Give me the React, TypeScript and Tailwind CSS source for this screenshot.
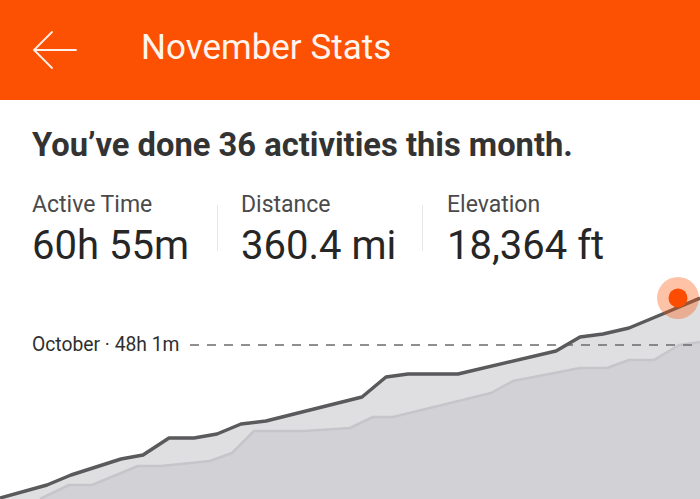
import React from "react";

const dark: [number, number][] = [
  [0, 498], [47, 485], [71, 475], [121, 459], [143, 455], [169, 438], [194, 438],
  [217, 434], [241, 424], [266, 421], [362, 397], [386, 377], [408, 374], [458, 374],
  [556, 351], [580, 337], [603, 334], [629, 328], [665, 313], [700, 298],
];

const light: [number, number][] = [
  [40, 499], [69, 485], [92, 485], [138, 466], [161, 466], [210, 461], [232, 453],
  [254, 431], [304, 431], [350, 428], [373, 417], [393, 417], [491, 393], [513, 381],
  [580, 368], [607, 368], [629, 360], [654, 360], [679, 345], [700, 342],
];

const line = (pts: [number, number][]) => pts.map(([x, y]) => `${x},${y}`).join(" ");
const area = (pts: [number, number][]) =>
  `${pts[0][0]},499 ${line(pts)} 700,499`;

const Stat = ({ label, value }: { label: string; value: string }) => (
  <div className="flex flex-col">
    <span className="text-[23px] leading-[26px] text-[#4a4a4a]">{label}</span>
    <span className="mt-[6px] text-[40px] leading-[44px] text-[#262626] whitespace-nowrap">{value}</span>
  </div>
);

export default function App() {
  return (
    <div className="w-[700px] h-[499px] overflow-hidden bg-white" style={{ fontFamily: "Roboto, 'Liberation Sans', sans-serif" }}>
      <header className="h-[100px] bg-[#fc5003] flex items-center">
        <svg className="ml-[32px] w-[46px] h-[40px]" viewBox="0 0 46 40" fill="none" stroke="#fff1ea" strokeWidth="1.8" strokeLinecap="round">
          <path d="M2 20 H44 M20 2 L2 20 L20 38" />
        </svg>
        <h1 className="ml-[63px] -mt-[4px] text-[35px] leading-[44px] text-[#fff4ee]">November Stats</h1>
      </header>

      <div className="h-[90px] flex items-center pl-[32px]">
        <h2 className="text-[32.7px] leading-[38px] font-bold text-[#333333] whitespace-nowrap">You’ve done 36 activities this month.</h2>
      </div>

      <div className="h-[70px] flex items-start pl-[32px] pt-[2px]">
        <div className="w-[185px]"><Stat label="Active Time" value="60h 55m" /></div>
        <div className="w-px h-[46px] mt-[13px] bg-[#e6e6e6]" />
        <div className="w-[204px] pl-[23px]"><Stat label="Distance" value="360.4 mi" /></div>
        <div className="w-px h-[46px] mt-[13px] bg-[#e6e6e6]" />
        <div className="pl-[24px]"><Stat label="Elevation" value="18,364 ft" /></div>
      </div>

      <div className="relative h-[239px]">
        <svg className="block w-[700px] h-[239px]" viewBox="0 260 700 239">
          <polygon points={area(dark)} fill="#dfdfe2" />
          <polygon points={area(light)} fill="#d2d2d6" />
          <polyline points={line(light)} fill="none" stroke="#c6c6ca" strokeWidth="2.5" strokeLinejoin="round" />
          <line x1="190" y1="345" x2="700" y2="345" stroke="#6b6b6b" strokeWidth="1.6" strokeDasharray="9 8" />
          <polyline points={line(dark)} fill="none" stroke="#5a5a5c" strokeWidth="3.5" strokeLinejoin="round" />
          <circle cx="678" cy="298" r="21" fill="#fc5003" fillOpacity="0.35" />
          <circle cx="678" cy="298" r="9.5" fill="#fc4c02" />
        </svg>
        <span className="absolute left-[32px] top-[74px] text-[19.3px] leading-[22px] text-[#2f2f2f]">October · 48h 1m</span>
      </div>
    </div>
  );
}
